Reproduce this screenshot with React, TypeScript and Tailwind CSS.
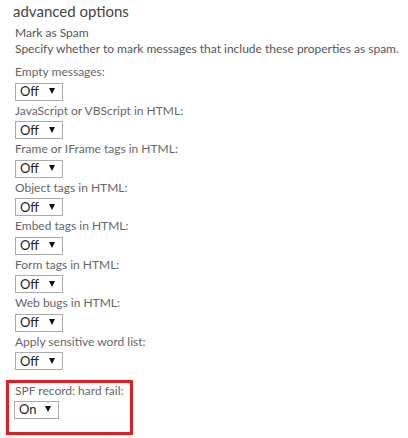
const rules = [
  "Empty messages:",
  "JavaScript or VBScript in HTML:",
  "Frame or IFrame tags in HTML:",
  "Object tags in HTML:",
  "Embed tags in HTML:",
  "Form tags in HTML:",
  "Web bugs in HTML:",
  "Apply sensitive word list:",
];

function Dropdown({ value, wide = true }: { value: string; wide?: boolean }) {
  return (
    <div
      className={`flex h-[18px] items-center justify-between border border-[#ababab] bg-white pl-[4px] pr-[7px] text-[13px] leading-none text-[#222] ${
        wide ? "w-[48px]" : "w-[45px]"
      }`}
    >
      <span>{value}</span>
      <svg width="6" height="6" viewBox="0 0 6 6" className="mb-[1px]">
        <path d="M0 0h6L3 6z" fill="#111" />
      </svg>
    </div>
  );
}

export default function App() {
  return (
    <div
      className="h-[438px] w-[408px] overflow-hidden bg-white pl-[13px] pt-[1px] text-[#666]"
      style={{ fontFamily: 'Lato, "Open Sans", sans-serif' }}
    >
      <h2 className="text-[15px] leading-[20px] text-[#444]">advanced options</h2>
      <div className="whitespace-nowrap pl-[2px] text-[12px]">
        <p className="mt-[4.4px] leading-[16px] text-[#555]">Mark as Spam</p>
        <p className="leading-[16px] text-[#555]">
          Specify whether to mark messages that include these properties as spam.
        </p>
        <div className="mt-[5px] flex flex-col">
          {rules.map((r) => (
            <div key={r} className="flex flex-col">
              <p className="leading-[20.5px]">{r}</p>
              <Dropdown value="Off" />
            </div>
          ))}
        </div>
      </div>
      <div className="ml-[-7px] mt-[9.5px] w-[127px] border-[3px] border-[#e31b23] pb-[13px] pl-[5px]">
        <p className="whitespace-nowrap pl-[1px] text-[12px] leading-[15px]">SPF record: hard fail:</p>
        <div className="mt-[3px]">
          <Dropdown value="On" wide={false} />
        </div>
      </div>
    </div>
  );
}
